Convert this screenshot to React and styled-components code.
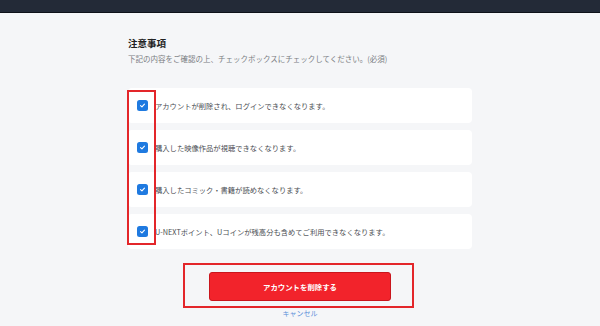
import React from "react";
import styled, { createGlobalStyle } from "styled-components";

const GlobalStyle = createGlobalStyle`
  html, body {
    margin: 0;
    padding: 0;
    background: #f5f6f8;
    font-family: "Noto Sans CJK JP", "Noto Sans", sans-serif;
  }
`;

const Page = styled.div`
  width: 600px;
  height: 326px;
  overflow: hidden;
  background: #f5f6f8;
`;

const Header = styled.header`
  height: 12px;
  background: #232a37;
  border-bottom: 1px solid #0e1219;
`;

const Main = styled.main`
  width: 344px;
  margin: 0 auto;
  padding-top: 23px;
`;

const Title = styled.h2`
  margin: 0;
  font-size: 9.5px;
  line-height: 14px;
  font-weight: 700;
  color: #222;
`;

const Lead = styled.p`
  margin: 2px 0 0;
  font-size: 7.5px;
  line-height: 14px;
  color: #7a7d82;
`;

const List = styled.div`
  position: relative;
  margin-top: 22px;
  display: flex;
  flex-direction: column;
  gap: 7px;
`;

const Card = styled.label`
  height: 35px;
  display: flex;
  align-items: center;
  gap: 7px;
  padding-left: 9px;
  background: #fff;
  border-radius: 4px;
  font-size: 7.3px;
  color: #4b4e53;
`;

const Box = styled.span`
  width: 11px;
  height: 11px;
  flex: none;
  border-radius: 2.5px;
  background: #1f7ae0;
  display: flex;
  align-items: center;
  justify-content: center;
`;

const Mark = styled.div`
  position: absolute;
  border: 2px solid ${(p) => p.$color || "#e3262a"};
  box-sizing: border-box;
`;

const Actions = styled.div`
  display: flex;
  flex-direction: column;
  align-items: center;
  margin-top: 22px;
`;

const ButtonWrap = styled.div`
  position: relative;
`;

const DangerButton = styled.button`
  width: 182px;
  height: 29px;
  border: 1px solid #c9161d;
  border-radius: 3px;
  background: #f2232b;
  color: #fff;
  font-family: inherit;
  font-size: 7.4px;
  font-weight: 700;
  cursor: pointer;
`;

const Cancel = styled.a`
  margin-top: 6px;
  font-size: 7px;
  line-height: 12px;
  color: #5a8fd8;
  text-decoration: none;
`;

const items = [
  "アカウントが削除され、ログインできなくなります。",
  "購入した映像作品が視聴できなくなります。",
  "購入したコミック・書籍が読めなくなります。",
  "U-NEXTポイント、Uコインが残高分も含めてご利用できなくなります。",
];

function Check() {
  return (
    <Box>
      <svg width="7" height="7" viewBox="0 0 10 10">
        <path d="M2.2 5.2 L4.2 7 L7.8 3" fill="none" stroke="#fff" strokeWidth="1.6" strokeLinecap="round" strokeLinejoin="round" />
      </svg>
    </Box>
  );
}

export default function App() {
  return (
    <Page>
      <GlobalStyle />
      <Header />
      <Main>
        <Title>注意事項</Title>
        <Lead>下記の内容をご確認の上、チェックボックスにチェックしてください。(必須)</Lead>
        <List>
          {items.map((t) => (
            <Card key={t}>
              <Check />
              <span>{t}</span>
            </Card>
          ))}
          <Mark style={{ left: -1, top: 2, width: 29, height: 155 }} />
        </List>
        <Actions>
          <ButtonWrap>
            <DangerButton>アカウントを削除する</DangerButton>
            <Mark style={{ left: -26, top: -8, right: -23, bottom: -7 }} />
          </ButtonWrap>
          <Cancel href="#">キャンセル</Cancel>
        </Actions>
      </Main>
    </Page>
  );
}
